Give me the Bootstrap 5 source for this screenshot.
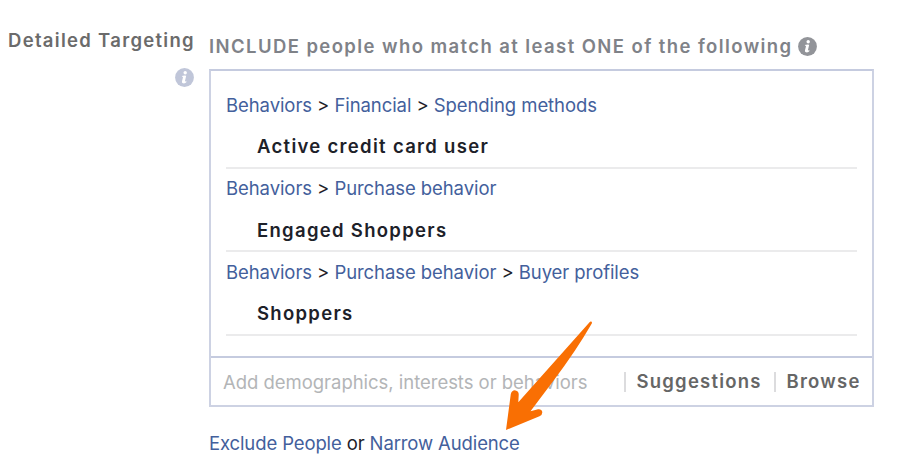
<!DOCTYPE html>
<html lang="en">
<head>
<meta charset="utf-8">
<meta name="viewport" content="width=device-width, initial-scale=1">
<title>Detailed Targeting</title>
<link href="https://cdn.jsdelivr.net/npm/bootstrap@5.3.0/dist/css/bootstrap.min.css" rel="stylesheet">
<style>
body{font-family:Inter,"Liberation Sans",sans-serif;font-size:18.5px;line-height:24px;color:#1d2129;background:#fff;height:464px;overflow:hidden;letter-spacing:-.075px}
a{color:#43609c;text-decoration:none}
.side{width:195px;padding-top:28px}
.side-label{font-weight:600;color:#6b6b6b;letter-spacing:1.3px}
.side-icon{margin-top:16px;margin-right:1.5px}
.main-col{width:665px;margin-left:14px;padding-top:34px}
.heading{font-weight:600;color:#7f8288;letter-spacing:1.41px}
.heading-icon{margin-left:5.5px}
.target-box{height:338px;margin-top:11px;border:2px solid #cdd2e3;border-top-color:#c5cbdf}
.rows{height:285px;padding:14px 15px 0}
.entry{height:83.5px;border-bottom:2px solid #ebebec;padding-top:7.5px}
.entry-name{font-weight:600;letter-spacing:1.3px;padding:17.5px 0 0 31px}
.search-bar{height:49px;border-top:2px solid #c5cbdf}
.placeholder-text{color:#b3b5b7;width:412.5px;padding-left:12px;letter-spacing:-.03px}
.action{font-weight:600;color:#666;border-left:2px solid #dcdcde;height:20px;line-height:19px;padding-left:11px;letter-spacing:1.22px}
.suggest{width:150px}
.browse{width:98px}
.below{margin-top:24px;letter-spacing:-.12px}
.pointer{left:500px;top:315px}
</style>
</head>
<body>
<main class="d-flex position-relative">
<div class="side text-end text-nowrap flex-shrink-0">
<div class="side-label">Detailed Targeting</div>
<svg class="side-icon d-block ms-auto" width="19" height="19" viewBox="0 0 19 19"><circle cx="9.5" cy="9.5" r="9.4" fill="#c0c6d9"/><g fill="#fff"><circle cx="10.2" cy="4.8" r="1.7"/><path d="M6.7 8.1Q9 7.2 11.2 7.8L9.9 13.3Q10.5 13.7 11.4 12.8L11.2 14.6Q9.3 16 7.4 15Q6.7 14.5 7 13.3L8 9.2Z"/></g></svg>
</div>
<div class="main-col text-nowrap flex-shrink-0">
<div class="heading d-flex align-items-center"><span>INCLUDE people who match at least ONE of the following</span>
<svg class="heading-icon flex-shrink-0" width="19" height="19" viewBox="0 0 19 19"><circle cx="9.5" cy="9.5" r="9.4" fill="#929499"/><g fill="#fff"><circle cx="10.2" cy="4.8" r="1.7"/><path d="M6.7 8.1Q9 7.2 11.2 7.8L9.9 13.3Q10.5 13.7 11.4 12.8L11.2 14.6Q9.3 16 7.4 15Q6.7 14.5 7 13.3L8 9.2Z"/></g></svg></div>
<section class="target-box">
<div class="rows">
<div class="entry"><div class="crumb"><a href="#">Behaviors</a> &gt; <a href="#">Financial</a> &gt; <a href="#">Spending methods</a></div><div class="entry-name">Active credit card user</div></div>
<div class="entry"><div class="crumb"><a href="#">Behaviors</a> &gt; <a href="#">Purchase behavior</a></div><div class="entry-name">Engaged Shoppers</div></div>
<div class="entry"><div class="crumb"><a href="#">Behaviors</a> &gt; <a href="#">Purchase behavior</a> &gt; <a href="#">Buyer profiles</a></div><div class="entry-name">Shoppers</div></div>
</div>
<div class="search-bar d-flex align-items-center">
<span class="placeholder-text">Add demographics, interests or behaviors</span>
<span class="action suggest">Suggestions</span><span class="action browse">Browse</span>
</div>
</section>
<div class="below"><a href="#">Exclude People</a> or <a href="#">Narrow Audience</a></div>
</div>
<svg class="pointer position-absolute" width="100" height="120" viewBox="0 0 100 120"><path d="M90 6.7Q92.5 6 91.8 8.6Q76 36 54 65L30.5 96.3L38 94.2Q41.6 93.7 42.3 97Q42.5 100 39.5 101.3L6 115L10.8 79Q12 75 15.5 75.4Q19 76 18.7 80L18.3 87.3Z" fill="#f96f03"/></svg>
</main>
<script src="https://cdn.jsdelivr.net/npm/bootstrap@5.3.0/dist/js/bootstrap.bundle.min.js"></script>
</body>
</html>
